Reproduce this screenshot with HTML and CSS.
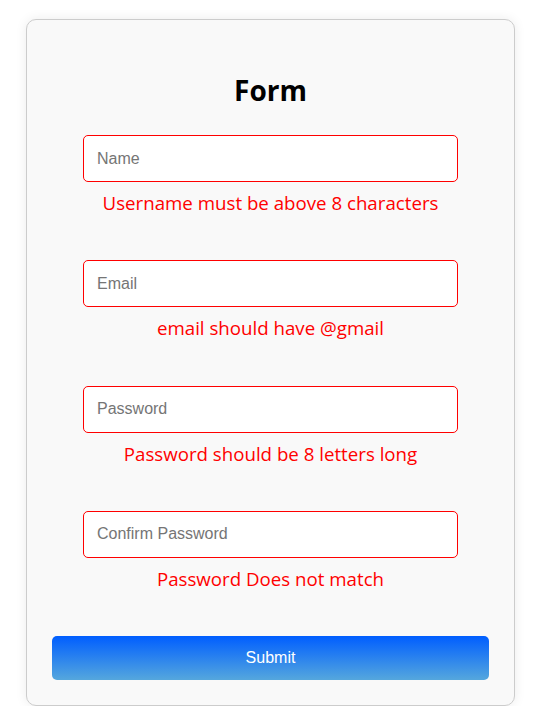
FILE: index.html
```html
<!DOCTYPE html>
<html lang="en">
<head>
  <meta charset="UTF-8" />
  <meta name="viewport" content="width=device-width, initial-scale=1.0"/>
  <title>Form</title>
  <link rel="stylesheet" href="styles.css">
</head>
<body>

  <form class="form-card" onsubmit="return false">
    <h2>Form</h2>

    <div class="field">
      <input type="text" placeholder="Name" />
      <div class="error">Username must be above 8 characters</div>
    </div>

    <div class="field">
      <input type="email" placeholder="Email" />
      <div class="error">email should have @gmail</div>
    </div>

    <div class="field">
      <input type="password" placeholder="Password" />
      <div class="error">Password should be 8 letters long</div>
    </div>

    <div class="field">
      <input type="password" placeholder="Confirm Password" />
      <div class="error">Password Does not match</div>
    </div>

    <button type="submit" class="btn">Submit</button>
  </form>

</body>
</html>
```

FILE: styles.css
```css
body {
  margin: 0;
  background: white;
  font-family: 'Open Sans', 'Noto Sans', sans-serif;
}

.form-card {
  box-sizing: border-box;
  width: 489px;
  margin: 19px 0 0 26px;
  padding: 26px 25px 25px;
  background: #f9f9f9;
  border: 1px solid #ccc;
  border-radius: 10px;
  box-shadow: 0 0 12px rgba(0,0,0,0.08);
  display: flex;
  flex-direction: column;
  align-items: center;
}

.form-card h2 {
  margin: 25px 0 26px;
  font-size: 28px;
  line-height: 38px;
  font-weight: 700;
  color: black;
}

.field {
  width: 375px;
  margin-bottom: 44px;
  text-align: center;
}

.field input {
  box-sizing: border-box;
  width: 100%;
  height: 47px;
  padding: 0 13px;
  border: 1px solid red;
  border-radius: 5px;
  background: white;
  font-family: 'Liberation Sans', Arial, sans-serif;
  font-size: 16px;
  outline: none;
}

.field input::placeholder {
  color: #757575;
}

.error {
  margin-top: 8px;
  color: red;
  font-size: 18.7px;
  line-height: 26.3px;
}

.btn {
  width: 100%;
  height: 44px;
  border: none;
  border-radius: 5px;
  background: linear-gradient(to bottom, #005eff, #55a7dd);
  color: white;
  font-family: 'Liberation Sans', Arial, sans-serif;
  font-size: 16px;
  cursor: pointer;
}
```
